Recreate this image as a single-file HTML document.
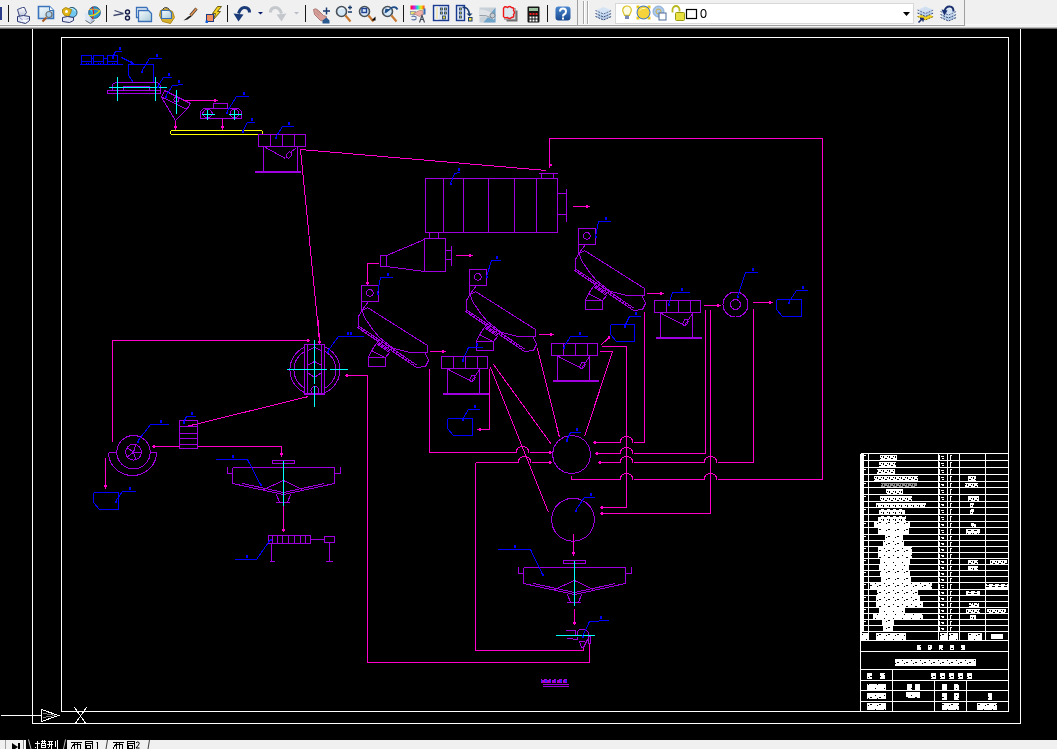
<!DOCTYPE html>
<html><head><meta charset="utf-8">
<style>
html,body{margin:0;padding:0;width:1057px;height:749px;overflow:hidden;background:#000;font-family:"Liberation Sans",sans-serif;}
.abs{position:absolute;left:0;top:0;}
#tb{position:absolute;left:0;top:0;width:1057px;height:29px;background:#f0f0f0;}
#tabs{position:absolute;left:0;top:739px;width:1057px;height:10px;background:#f0f0f0;overflow:hidden;}
</style></head><body>
<div id="tb">
<svg class="abs" width="1057" height="29">
<rect x="0" y="24" width="1057" height="1" fill="#f8f8f8"/>
<rect x="0" y="25" width="965" height="1" fill="#a0a0a0"/>
<rect x="964" y="0" width="1" height="26" fill="#a0a0a0"/>
<rect x="0" y="26" width="1057" height="1" fill="#f4f4f4"/>
<rect x="0" y="27" width="1057" height="1" fill="#bdbdbd"/>
<rect x="0" y="28" width="1057" height="1" fill="#6a6a6a"/>
<rect x="8" y="5" width="1" height="17" fill="#1a1a1a"/>
<rect x="106" y="5" width="1" height="17" fill="#1a1a1a"/>
<rect x="227" y="5" width="1" height="17" fill="#1a1a1a"/>
<rect x="305" y="5" width="1" height="17" fill="#1a1a1a"/>
<rect x="403" y="5" width="1" height="17" fill="#1a1a1a"/>
<rect x="547" y="5" width="1" height="17" fill="#1a1a1a"/>
<rect x="0" y="7" width="2" height="13" fill="#2c3e8a"/>
<rect x="577" y="0" width="1" height="25" fill="#a0a0a0"/>
<rect x="583" y="1" width="1" height="23" fill="#a8a8a8"/><rect x="584" y="1" width="1" height="23" fill="#ffffff"/>
<rect x="587" y="1" width="1" height="23" fill="#a8a8a8"/><rect x="588" y="1" width="1" height="23" fill="#ffffff"/>
<g transform="translate(16.5,6.5)"><defs><linearGradient id="pg" x1="0" y1="0" x2="0" y2="1"><stop offset="0" stop-color="#ffffff"/><stop offset="1" stop-color="#b8bfd8"/></linearGradient></defs><path d="M1 3l5-2h2l2 5-3 4H3z" fill="url(#pg)" stroke="#3a4680"/><path d="M1 10l6-1 6 1v4l-4 3-4-1-4-1z" fill="#e4e8f6" stroke="#2a3670"/><path d="M3 11l4 3 5-2" stroke="#8a94c0" fill="none"/><rect x="6" y="13" width="5" height="2" fill="#fff"/></g>
<g transform="translate(38.5,6.5)"><defs><linearGradient id="dg" x1="0" y1="0" x2="1" y2="1"><stop offset="0" stop-color="#f4f8fc"/><stop offset="1" stop-color="#b4d4e4"/></linearGradient></defs><path d="M0 0h11l4 4v8H0z" fill="url(#dg)" stroke="#3a74bc" stroke-width="1.6"/><path d="M11 0v4h4" fill="#fff" stroke="#3a74bc"/><circle cx="10.5" cy="8" r="3" fill="#a8d0ee" stroke="#707070" stroke-width="1.2"/><path d="M8 11l-4 4" stroke="#a85a20" stroke-width="2"/></g>
<g transform="translate(61.5,5.5)"><circle cx="10.5" cy="7" r="5" fill="#70c8f0" stroke="#24506a"/><path d="M8 3q4 -1 6 3" stroke="#c8f0ff" fill="none"/><path d="M1 4l3-2 3 1 3 1-1 4-2 3-4-1-2-3z" fill="#e0b418" stroke="#a07800" stroke-width="0.8"/><circle cx="5" cy="6" r="1.5" fill="#fff"/><path d="M1 12l5-1 6 1v3l-4 2-7-1z" fill="#e4e8f6" stroke="#2a3670"/></g>
<g transform="translate(84.5,5.5)"><path d="M0 7l6 2v9L1 15z" fill="#dce6f4"/><path d="M6 9l4-1v7l-4 3z" fill="#b4c4dc"/><path d="M1 15l5 3 4-3" stroke="#606870" fill="none"/><circle cx="10" cy="7" r="5.8" fill="#2c9ad4" stroke="#1e5a80"/><path d="M6 4q3 2 3 8" fill="none" stroke="#40d0ff" stroke-width="1.5"/><path d="M8 1.5q2 6 0 12" stroke="#d02020" fill="none" stroke-width="1.2"/><path d="M4.5 4q6 -1 11 1" stroke="#e8a030" fill="none"/><path d="M4.5 10q6 1 11 -5" stroke="#d8e020" fill="none" stroke-width="1.2"/></g>
<g transform="translate(113.5,9.5)"><path d="M0 6l10-2M1 1l9 3" stroke="#404a70" stroke-width="1.3"/><circle cx="14" cy="2.5" r="2" fill="none" stroke="#121a48" stroke-width="1.4"/><circle cx="14" cy="8.5" r="2" fill="none" stroke="#121a48" stroke-width="1.4"/></g>
<g transform="translate(136.5,7.5)"><defs><linearGradient id="cg" x1="0" y1="0" x2="1" y2="1"><stop offset="0" stop-color="#f8fcff"/><stop offset="1" stop-color="#a8cad8"/></linearGradient></defs><path d="M0 0h10l1 1v9H0z" fill="#eef4fa" stroke="#3a70b8" stroke-width="1.3"/><path d="M2 3h10l3 3v8H2z" fill="url(#cg)" stroke="#3a70b8" stroke-width="1.3"/></g>
<g transform="translate(158.5,6.5)"><path d="M2 4l6-2 6 3 2 6-4 6-8-2-3-6z" fill="#d8b030" stroke="#a07800" stroke-width="0.8"/><path d="M4 3q3-4 7 0" stroke="#303030" fill="none"/><path d="M3 4h8l2 2v6H3z" fill="url(#cg)" stroke="#3a70b8" stroke-width="1.2"/></g>
<g transform="translate(183.5,7.5)"><path d="M13 1l-6 7" stroke="#4a3a30" stroke-width="3"/><path d="M13 1l-6 7" stroke="#e09050" stroke-width="1.6"/><path d="M7 8l-2 1-5 4 4-1 4-3z" fill="#1a1a1a"/></g>
<g transform="translate(205.5,5.5)"><path d="M12 1h4l-4 5h3l-7 8 2-6h-3z" fill="#f4d020" stroke="#4a4000" stroke-width="0.8"/><rect x="1" y="9" width="7" height="7" fill="#f09060" stroke="#203a80"/><rect x="0" y="15" width="2.5" height="2.5" fill="#1060e0"/></g>
<g transform="translate(233.5,5.5)"><path d="M16 7q0-5-5-5-4 0-6 6" fill="none" stroke="#1a3a78" stroke-width="3"/><path d="M0 8l10 1-5 7z" fill="#1a3a78"/></g>
<path d="M258 12h5l-2.5 2.5z" fill="#0a1a6a"/>
<g transform="translate(269.5,5.5)"><path d="M1 7q0-5 5-5 4 0 6 6" fill="none" stroke="#c4c8cc" stroke-width="3"/><path d="M17 8l-10 1 5 7z" fill="#c4c8cc"/></g>
<path d="M294 12h5l-2.5 2.5z" fill="#b8bcc8"/>
<g transform="translate(312.5,6.5)"><path d="M1 3q2-2 5 1l5 5 3 1-1 5-5-1-6-6z" fill="#d8a098" stroke="#a06a68" stroke-width="0.8"/><path d="M3 6l4 3M4 4l4 3" stroke="#b07a78" stroke-width="0.6"/><path d="M10 14l4-3 3 3v3h-7z" fill="#2a5a90"/><path d="M14 1v7M10.5 4.5h7" stroke="#1a3a70" stroke-width="1.5"/></g>
<g transform="translate(335.5,4.5)"><circle cx="6" cy="7" r="5" fill="#d4e8f8" stroke="#4a5058" stroke-width="1.6"/><path d="M4 5q2-2 4-1" stroke="#fff" fill="none"/><path d="M10 11l5 6" stroke="#c87830" stroke-width="2.2"/><path d="M12.5 3h4M14.5 1v4M12.5 7.5h4" stroke="#1a3a6a" stroke-width="1.3"/></g>
<g transform="translate(358.5,4.5)"><circle cx="6" cy="7" r="5" fill="#d4e8f8" stroke="#4a5058" stroke-width="1.6"/><path d="M4 5q2-2 4-1" stroke="#fff" fill="none"/><path d="M10 11l5 6" stroke="#c87830" stroke-width="2.2"/><rect x="3.5" y="4" width="4.5" height="4" fill="none" stroke="#1f3f90" stroke-width="1.4"/><path d="M13 16h4v-4z" fill="#000"/></g>
<g transform="translate(381.5,4.5)"><circle cx="6" cy="7" r="5" fill="#d4e8f8" stroke="#4a5058" stroke-width="1.6"/><path d="M4 5q2-2 4-1" stroke="#fff" fill="none"/><path d="M10 11l5 6" stroke="#c87830" stroke-width="2.2"/><path d="M9 4q5-3 7 1" fill="none" stroke="#1f4f8a" stroke-width="1.8"/><path d="M3 9l1-5 5 1z" fill="#1f4f8a"/><path d="M4 8l5-4" stroke="#1f4f8a" stroke-width="1.5"/></g>
<defs><linearGradient id="rb"><stop offset="0" stop-color="#ff1010"/><stop offset=".25" stop-color="#e010e0"/><stop offset=".5" stop-color="#10e0e0"/><stop offset=".75" stop-color="#f0f010"/><stop offset="1" stop-color="#ff4010"/></linearGradient></defs>
<g transform="translate(410.5,5.5)"><rect x="0" y="0" width="14" height="4" fill="url(#rb)"/><rect x="0" y="6" width="5" height="3" fill="#e8e070" stroke="#6a7aa0" stroke-width="0.6"/><path d="M3 8l6-3 3 0 1 4-4 2z" fill="#f0b0a8" stroke="#a07070" stroke-width="0.6"/><rect x="13" y="3" width="2" height="6" fill="#3a6ab0"/><path d="M1 11q3-1 5 1M1 14q3 1 5-1" fill="none" stroke="#5a70a8" stroke-width="1.1"/><path d="M9 17l2.5-7 2.5 7M10 14h3" fill="none" stroke="#404858" stroke-width="1.1"/></g>
<g transform="translate(433.5,5.5)"><rect x="0" y="0" width="15" height="15" fill="#dde6f2" stroke="#1a3a90" stroke-width="1.4"/><rect x="2" y="1" width="3" height="13" fill="#f8f8ff"/><path d="M3.5 2v12" stroke="#d8b000" stroke-dasharray="1 1"/><g fill="#e0d040" stroke="#1a3a70" stroke-width="0.8"><rect x="7" y="2.5" width="2" height="2"/><rect x="11" y="2.5" width="2" height="2"/><rect x="7" y="6.5" width="2" height="2"/><rect x="11" y="6.5" width="2" height="2"/><rect x="9" y="10.5" width="3" height="3"/></g></g>
<g transform="translate(456.5,5.5)"><rect x="0" y="0" width="8" height="15" fill="#dde6f2" stroke="#1a3a90" stroke-width="1.4"/><g fill="#e0d040" stroke="#1a3a70" stroke-width="0.8"><rect x="3" y="2.5" width="2" height="2"/><rect x="3" y="6.5" width="2" height="2"/><rect x="3" y="10.5" width="2" height="2"/></g><path d="M6 2q6-1 7 7" fill="none" stroke="#1a3a70" stroke-width="1.6"/><path d="M10 8h6l-3 3z" fill="#1a3a70"/><rect x="12" y="12" width="3.5" height="3.5" fill="#f0e040" stroke="#1a3a70"/></g>
<g transform="translate(479.5,7.5)"><rect x="0" y="0" width="16" height="15" fill="#c8d0d8"/><path d="M16 0v15H4z" fill="#5a9ac8" opacity=".8"/><path d="M0 2q8 0 14 5 3 3 0 5-8-4-14-2z" fill="#e0e4e8"/><path d="M0 8q7-1 13 3" stroke="#909aa4" fill="none"/><ellipse cx="13" cy="8" rx="2.5" ry="2.5" fill="#c4ccd4" stroke="#7a8490"/></g>
<g transform="translate(502.5,6.5)"><rect x="4" y="4" width="11" height="11" fill="#707070"/><rect x="2" y="2" width="11" height="11" fill="#d4d8e0" stroke="#8a8a8a" stroke-width="0.6"/><path d="M1 2q1-3 4-1 2-2 4 0 3 0 2 3 2 2 0 4 1 3-2 3-2 2-4 0-3 1-4-1 0-3 0-4z" fill="#dce8f0" stroke="#ee1818" stroke-width="1.4"/></g>
<g transform="translate(527.5,6.5)"><rect x="0" y="0" width="12" height="16" rx="1" fill="#161616"/><rect x="1.5" y="1.5" width="9" height="3" fill="#9ac0a0"/><g fill="#e82020"><rect x="2" y="6.5" width="2" height="2"/><rect x="5" y="6.5" width="2" height="2"/><rect x="8" y="6.5" width="2" height="2"/></g><g fill="#ffffff"><rect x="2" y="10" width="2" height="2"/><rect x="5" y="10" width="2" height="2"/><rect x="8" y="10" width="2" height="2"/><rect x="2" y="13" width="2" height="2"/><rect x="5" y="13" width="2" height="2"/><rect x="8" y="13" width="2" height="2"/></g></g>
<g transform="translate(555.5,6.5)"><defs><linearGradient id="hg" x1="0" y1="0" x2="0" y2="1"><stop offset="0" stop-color="#4a88d0"/><stop offset="1" stop-color="#1a4a90"/></linearGradient></defs><rect x="0" y="0" width="15" height="14" rx="3" fill="url(#hg)"/><path d="M4.5 5q0-3 3-3t3 3q0 2-2 3-1 .5-1 2" fill="none" stroke="#fff" stroke-width="2"/><rect x="6.5" y="11" width="2" height="2" fill="#fff"/></g>
<g transform="translate(595.5,6.5)"><path d="M0 10l8 -3.5 8 3.5-8 3.5z" fill="#b4cce6"/><path d="M0 10l8 3.5 8-3.5" fill="none" stroke="#3a4a78" stroke-width="1" stroke-dasharray="2 1"/><path d="M0 7l8 -3.5 8 3.5-8 3.5z" fill="#c4d8ee"/><path d="M0 7l8 3.5 8-3.5" fill="none" stroke="#3a4a78" stroke-width="1" stroke-dasharray="2 1"/><path d="M0 4l8 -3.5 8 3.5-8 3.5z" fill="#d4e4f4"/><path d="M0 4l8 3.5 8-3.5" fill="none" stroke="#5a6a98" stroke-width="1" stroke-dasharray="2 1"/></g>
<rect x="615.5" y="3.5" width="298" height="20" fill="#ffffff" stroke="#d8d8d8"/>
<g transform="translate(622.5,5.5)"><path d="M4.5 0.5a4.3 4.3 0 0 1 4.3 4.3c0 2-1.5 3-1.8 5H2c-.3-2-1.8-3-1.8-5A4.3 4.3 0 0 1 4.5 0.5z" fill="#fffbe0" stroke="#d8c020" stroke-width="1.2"/><rect x="2.5" y="10" width="4" height="3.5" fill="#7a8ab8"/></g>
<g transform="translate(636.5,5.5)"><path d="M0 0h3v3H0zM11 0h3v3h-3zM0 11h3v3H0zM11 11h3v3h-3z" fill="#e8c820"/><circle cx="7" cy="7" r="6.5" fill="#f4d43a" stroke="#3a70c0" stroke-width="1"/><path d="M3 5q2-3 6-2" stroke="#fff6b0" fill="none"/></g>
<g transform="translate(652.5,5.5)"><circle cx="6" cy="6" r="5.5" fill="#a8c8ee" stroke="#8aa8d0"/><circle cx="6" cy="6" r="2.5" fill="none" stroke="#d0b040"/><rect x="6.5" y="7.5" width="7" height="7" fill="#fff" stroke="#4a6a9a"/></g>
<g transform="translate(670.5,5.5)"><path d="M2 7V4a3.5 3.5 0 0 1 7 0v2" fill="none" stroke="#b8b820" stroke-width="1.8"/><rect x="5" y="7" width="9" height="8" rx="1" fill="#e8e040" stroke="#9a9a10"/></g>
<rect x="686.5" y="9.5" width="10" height="9" fill="none" stroke="#000" stroke-width="1.2"/>
<path d="M703.5 9.5q-2.5 0-2.5 4t2.5 4 2.5-4-2.5-4z" fill="none" stroke="#000" stroke-width="1.1"/>
<path d="M903 12h7l-3.5 4z" fill="#000"/>
<g transform="translate(917.5,5.5)"><path d="M0 11l8 -3.5 8 3.5-8 3.5z" fill="#f0d020"/><path d="M0 11l8 3.5 8-3.5" fill="none" stroke="#8a7000" stroke-width="1" stroke-dasharray="2 1"/><path d="M0 7.5l8 -3.5 8 3.5-8 3.5z" fill="#b8d0ea"/><path d="M0 7.5l8 3.5 8-3.5" fill="none" stroke="#3a4a78" stroke-width="1" stroke-dasharray="2 1"/><path d="M0 4.5l8 -3.5 8 3.5-8 3.5z" fill="#d0e0f2"/><path d="M0 4.5l8 3.5 8-3.5" fill="none" stroke="#5a6a98" stroke-width="1" stroke-dasharray="2 1"/><path d="M1 17l4-4M2.5 13h3v3" stroke="#1a2a6a" stroke-width="1.5" fill="none"/></g>
<g transform="translate(940.5,5.5)"><path d="M0 12l8 -3.5 8 3.5-8 3.5z" fill="#b4cce6"/><path d="M0 12l8 3.5 8-3.5" fill="none" stroke="#3a4a78" stroke-width="1" stroke-dasharray="2 1"/><path d="M0 9l8 -3.5 8 3.5-8 3.5z" fill="#c4d8ee"/><path d="M0 9l8 3.5 8-3.5" fill="none" stroke="#3a4a78" stroke-width="1" stroke-dasharray="2 1"/><path d="M0 6l8 -3.5 8 3.5-8 3.5z" fill="#d4e4f4"/><path d="M0 6l8 3.5 8-3.5" fill="none" stroke="#5a6a98" stroke-width="1" stroke-dasharray="2 1"/><path d="M13 6q0-5-4-5-4 0-5 5" fill="none" stroke="#1a3070" stroke-width="2"/><path d="M1 4l6 1-3 5z" fill="#1a3070"/></g>
</svg>
</div>
<svg class="abs" width="1057" height="749" shape-rendering="crispEdges" style="top:0">
<line x1="32.5" y1="28.5" x2="32.5" y2="723.5" stroke="#ffffff" stroke-width="1"/>
<line x1="1020.5" y1="28.5" x2="1020.5" y2="723.5" stroke="#ffffff" stroke-width="1"/>
<line x1="32.5" y1="723.5" x2="1020.5" y2="723.5" stroke="#ffffff" stroke-width="1"/>
<rect x="61.5" y="37.5" width="947" height="674" stroke="#ffffff" stroke-width="1" fill="none"/>
<line x1="0.5" y1="715.5" x2="41.5" y2="715.5" stroke="#ffffff" stroke-width="1"/>
<polygon points="41.5,709.5 58.5,715.5 41.5,721.5" fill="none" stroke="#fff" stroke-width="1"/>
<line x1="43.5" y1="713.5" x2="55.5" y2="715.5" stroke="#808080" stroke-width="1"/>
<line x1="43.5" y1="717.5" x2="55.5" y2="715.5" stroke="#808080" stroke-width="1"/>
<line x1="74.5" y1="707.5" x2="86.5" y2="724.5" stroke="#ffffff" stroke-width="1"/>
<line x1="86.5" y1="707.5" x2="74.5" y2="724.5" stroke="#ffffff" stroke-width="1"/>
<rect x="81.5" y="55.5" width="10" height="9" stroke="#0000ff" stroke-width="1" fill="none"/>
<rect x="93.5" y="55.5" width="10" height="9" stroke="#0000ff" stroke-width="1" fill="none"/>
<rect x="107.5" y="55.5" width="10" height="9" stroke="#0000ff" stroke-width="1" fill="none"/>
<line x1="79.5" y1="64.5" x2="122.5" y2="64.5" stroke="#0000ff" stroke-width="1"/>
<line x1="81.5" y1="61.5" x2="91.5" y2="61.5" stroke="#0000ff" stroke-width="1"/>
<line x1="93.5" y1="61.5" x2="103.5" y2="61.5" stroke="#0000ff" stroke-width="1"/>
<line x1="107.5" y1="61.5" x2="117.5" y2="61.5" stroke="#0000ff" stroke-width="1"/>
<line x1="91.5" y1="58.5" x2="93.5" y2="58.5" stroke="#0000ff" stroke-width="1"/>
<line x1="103.5" y1="58.5" x2="107.5" y2="58.5" stroke="#0000ff" stroke-width="1"/>
<line x1="86.5" y1="62.5" x2="86.5" y2="63.5" stroke="#0000ff" stroke-width="1"/>
<line x1="88.5" y1="62.5" x2="88.5" y2="63.5" stroke="#0000ff" stroke-width="1"/>
<line x1="98.5" y1="62.5" x2="98.5" y2="63.5" stroke="#0000ff" stroke-width="1"/>
<line x1="100.5" y1="62.5" x2="100.5" y2="63.5" stroke="#0000ff" stroke-width="1"/>
<line x1="112.5" y1="62.5" x2="112.5" y2="63.5" stroke="#0000ff" stroke-width="1"/>
<line x1="114.5" y1="62.5" x2="114.5" y2="63.5" stroke="#0000ff" stroke-width="1"/>
<polyline points="112.5,57.5 115.5,51.5 121.5,51.5" stroke="#0000ff" stroke-width="1" fill="none"/>
<rect x="112" y="57" width="2" height="2" fill="#0000ff"/>
<rect x="119" y="47" width="2" height="3" fill="#0000ff"/>
<line x1="121.5" y1="57.5" x2="133.5" y2="63.5" stroke="#0000ff" stroke-width="1"/>
<line x1="131.5" y1="61.5" x2="133.5" y2="63.5" stroke="#0000ff" stroke-width="1"/>
<line x1="130.5" y1="63.5" x2="133.5" y2="63.5" stroke="#0000ff" stroke-width="1"/>
<polyline points="128.5,75.5 128.5,64.5 153.5,64.5 153.5,82.5 133.5,82.5 128.5,75.5" stroke="#0000ff" stroke-width="1" fill="none"/>
<polyline points="141.5,71.5 149.5,58.5 161.5,58.5" stroke="#0000ff" stroke-width="1" fill="none"/>
<rect x="141" y="71" width="2" height="2" fill="#0000ff"/>
<rect x="156" y="54" width="2" height="3" fill="#0000ff"/>
<rect x="107.5" y="90.5" width="53" height="3" stroke="#a000e0" stroke-width="1" fill="none"/>
<polyline points="112.5,90.5 112.5,84.5 115.5,82.5 157.5,82.5 160.5,85.5 160.5,90.5" stroke="#a000e0" stroke-width="1" fill="none"/>
<polyline points="112.5,90.5 123.5,90.5 123.5,86.5 149.5,86.5 149.5,90.5 160.5,90.5" stroke="#a000e0" stroke-width="1" fill="none"/>
<line x1="108.5" y1="87.5" x2="166.5" y2="87.5" stroke="#00ffff" stroke-width="1"/>
<line x1="117.5" y1="76.5" x2="117.5" y2="100.5" stroke="#00ffff" stroke-width="1"/>
<line x1="155.5" y1="76.5" x2="155.5" y2="100.5" stroke="#00ffff" stroke-width="1"/>
<polyline points="157.5,86.5 163.5,77.5 171.5,77.5" stroke="#0000ff" stroke-width="1" fill="none"/>
<rect x="157" y="86" width="2" height="2" fill="#0000ff"/>
<rect x="168" y="73" width="2" height="3" fill="#0000ff"/>
<polyline points="164.5,90.5 190.5,103.5 187.5,108.5 175.5,120.5 161.5,97.5 164.5,90.5" stroke="#a000e0" stroke-width="1" fill="none"/>
<line x1="162.5" y1="97.5" x2="187.5" y2="109.5" stroke="#a000e0" stroke-width="1"/>
<circle cx="176.5" cy="99.5" r="2.5" stroke="#a000e0" stroke-width="1" fill="none"/>
<line x1="176.5" y1="89.5" x2="176.5" y2="113.5" stroke="#00ffff" stroke-width="1"/>
<polyline points="165.5,96.5 172.5,85.5 183.5,84.5" stroke="#0000ff" stroke-width="1" fill="none"/>
<rect x="165" y="96" width="2" height="2" fill="#0000ff"/>
<rect x="178" y="80" width="2" height="3" fill="#0000ff"/>
<line x1="175.5" y1="120.5" x2="175.5" y2="130.5" stroke="#ff00cc" stroke-width="1"/>
<rect x="174" y="126" width="3" height="2" fill="#ff00cc"/>
<line x1="182.5" y1="100.5" x2="217.5" y2="100.5" stroke="#ff00cc" stroke-width="1"/>
<rect x="214" y="99" width="2" height="3" fill="#ff00cc"/>
<rect x="213.5" y="103.5" width="14" height="5" stroke="#a000e0" stroke-width="1" fill="none"/>
<polyline points="203.5,108.5 238.5,108.5 241.5,111.5 241.5,118.5 200.5,118.5 200.5,111.5 203.5,108.5" stroke="#a000e0" stroke-width="1" fill="none"/>
<polygon points="212.5,113.5 211.5,115.5 210.5,116.5 209.5,117.5 207.5,117.5 205.5,117.5 204.5,116.5 203.5,115.5 202.5,113.5 203.5,111.5 204.5,110.5 205.5,109.5 207.5,109.5 209.5,109.5 210.5,110.5 211.5,111.5" stroke="#a000e0" stroke-width="1" fill="none"/>
<polygon points="238.5,113.5 238.5,115.5 237.5,116.5 236.5,117.5 234.5,117.5 232.5,117.5 231.5,116.5 230.5,115.5 230.5,113.5 230.5,111.5 231.5,110.5 232.5,109.5 234.5,109.5 236.5,109.5 237.5,110.5 238.5,111.5" stroke="#a000e0" stroke-width="1" fill="none"/>
<line x1="201.5" y1="114.5" x2="214.5" y2="114.5" stroke="#00ffff" stroke-width="1"/>
<line x1="207.5" y1="109.5" x2="207.5" y2="119.5" stroke="#00ffff" stroke-width="1"/>
<line x1="228.5" y1="114.5" x2="241.5" y2="114.5" stroke="#00ffff" stroke-width="1"/>
<line x1="234.5" y1="109.5" x2="234.5" y2="119.5" stroke="#00ffff" stroke-width="1"/>
<line x1="222.5" y1="118.5" x2="222.5" y2="130.5" stroke="#ff00cc" stroke-width="1"/>
<rect x="221" y="126" width="3" height="2" fill="#ff00cc"/>
<polyline points="226.5,112.5 236.5,96.5 248.5,96.5" stroke="#0000ff" stroke-width="1" fill="none"/>
<rect x="226" y="112" width="2" height="2" fill="#0000ff"/>
<rect x="243" y="92" width="2" height="3" fill="#0000ff"/>
<rect x="170.5" y="130.5" width="92" height="4" rx="2" fill="none" stroke="#ffff00"/>
<polyline points="242.5,131.5 247.5,122.5 254.5,122.5" stroke="#0000ff" stroke-width="1" fill="none"/>
<rect x="242" y="131" width="2" height="2" fill="#0000ff"/>
<rect x="251" y="118" width="2" height="3" fill="#0000ff"/>
<rect x="258.5" y="134.5" width="47" height="12" stroke="#a000e0" stroke-width="1" fill="none"/>
<line x1="270.5" y1="134.5" x2="270.5" y2="146.5" stroke="#a000e0" stroke-width="1"/>
<line x1="282.5" y1="134.5" x2="282.5" y2="146.5" stroke="#a000e0" stroke-width="1"/>
<line x1="294.5" y1="134.5" x2="294.5" y2="146.5" stroke="#a000e0" stroke-width="1"/>
<line x1="263.5" y1="146.5" x2="263.5" y2="172.5" stroke="#a000e0" stroke-width="1"/>
<line x1="297.5" y1="146.5" x2="297.5" y2="172.5" stroke="#a000e0" stroke-width="1"/>
<rect x="255" y="171" width="46" height="2" fill="#a000e0"/>
<line x1="265.5" y1="147.5" x2="285.5" y2="158.5" stroke="#a000e0" stroke-width="1"/>
<line x1="296.5" y1="147.5" x2="290.5" y2="152.5" stroke="#a000e0" stroke-width="1"/>
<ellipse cx="289" cy="155" rx="2.2" ry="3.3" transform="rotate(30 289 155)" fill="none" stroke="#a000e0"/>
<polyline points="275.5,137.5 282.5,126.5 293.5,126.5" stroke="#0000ff" stroke-width="1" fill="none"/>
<rect x="275" y="137" width="2" height="2" fill="#0000ff"/>
<rect x="288" y="122" width="2" height="3" fill="#0000ff"/>
<line x1="300.5" y1="149.5" x2="546.5" y2="170.5" stroke="#ff00cc" stroke-width="1"/>
<line x1="300.5" y1="149.5" x2="319.5" y2="341.5" stroke="#ff00cc" stroke-width="1"/>
<rect x="425.5" y="178.5" width="132" height="54" stroke="#a000e0" stroke-width="1" fill="none"/>
<line x1="443.5" y1="178.5" x2="443.5" y2="232.5" stroke="#a000e0" stroke-width="1"/>
<line x1="463.5" y1="178.5" x2="463.5" y2="232.5" stroke="#a000e0" stroke-width="1"/>
<line x1="488.5" y1="178.5" x2="488.5" y2="232.5" stroke="#a000e0" stroke-width="1"/>
<line x1="514.5" y1="178.5" x2="514.5" y2="232.5" stroke="#a000e0" stroke-width="1"/>
<line x1="536.5" y1="178.5" x2="536.5" y2="232.5" stroke="#a000e0" stroke-width="1"/>
<line x1="538.5" y1="173.5" x2="557.5" y2="173.5" stroke="#a000e0" stroke-width="1"/>
<line x1="541.5" y1="173.5" x2="541.5" y2="178.5" stroke="#a000e0" stroke-width="1"/>
<line x1="553.5" y1="173.5" x2="553.5" y2="178.5" stroke="#a000e0" stroke-width="1"/>
<line x1="566.5" y1="188.5" x2="566.5" y2="221.5" stroke="#a000e0" stroke-width="1"/>
<line x1="557.5" y1="193.5" x2="566.5" y2="193.5" stroke="#a000e0" stroke-width="1"/>
<line x1="557.5" y1="214.5" x2="566.5" y2="214.5" stroke="#a000e0" stroke-width="1"/>
<line x1="572.5" y1="206.5" x2="589.5" y2="206.5" stroke="#ff00cc" stroke-width="1"/>
<rect x="586" y="205" width="2" height="3" fill="#ff00cc"/>
<polyline points="450.5,183.5 454.5,173.5 460.5,172.5" stroke="#0000ff" stroke-width="1" fill="none"/>
<rect x="450" y="183" width="2" height="2" fill="#0000ff"/>
<rect x="458" y="168" width="2" height="3" fill="#0000ff"/>
<polyline points="549.5,167.5 549.5,138.5 822.5,138.5 822.5,478.5" stroke="#ff00cc" stroke-width="1" fill="none"/>
<rect x="549" y="164" width="3" height="2" fill="#ff00cc"/>
<line x1="429.5" y1="232.5" x2="429.5" y2="238.5" stroke="#a000e0" stroke-width="1"/>
<line x1="438.5" y1="232.5" x2="438.5" y2="238.5" stroke="#a000e0" stroke-width="1"/>
<rect x="424.5" y="238.5" width="21" height="33" stroke="#a000e0" stroke-width="1" fill="none"/>
<polyline points="424.5,239.5 386.5,255.5 386.5,266.5 424.5,271.5" stroke="#a000e0" stroke-width="1" fill="none"/>
<rect x="380.5" y="255.5" width="6" height="11" stroke="#a000e0" stroke-width="1" fill="none"/>
<line x1="451.5" y1="245.5" x2="451.5" y2="265.5" stroke="#a000e0" stroke-width="1"/>
<line x1="445.5" y1="250.5" x2="451.5" y2="250.5" stroke="#a000e0" stroke-width="1"/>
<line x1="445.5" y1="259.5" x2="451.5" y2="259.5" stroke="#a000e0" stroke-width="1"/>
<line x1="455.5" y1="255.5" x2="472.5" y2="255.5" stroke="#ff00cc" stroke-width="1"/>
<rect x="469" y="254" width="2" height="3" fill="#ff00cc"/>
<polyline points="378.5,263.5 367.5,263.5 367.5,285.5" stroke="#ff00cc" stroke-width="1" fill="none"/>
<rect x="366" y="282" width="3" height="2" fill="#ff00cc"/>
<rect x="361.5" y="285.5" width="17" height="16" stroke="#a000e0" stroke-width="1" fill="none"/>
<circle cx="369.8" cy="292.9" r="3.3" stroke="#a000e0" stroke-width="1" fill="none"/>
<polyline points="361.5,301.5 361.5,310.5" stroke="#a000e0" stroke-width="1" fill="none"/>
<polyline points="368.5,301.5 362.5,309.5" stroke="#a000e0" stroke-width="1" fill="none"/>
<polyline points="362.5,310.5 367.5,307.5 427.5,345.5 427.5,352.5 410.5,352.5 393.5,348.5 379.5,337.5 373.5,330.5 364.5,317.5 362.5,311.5" stroke="#a000e0" stroke-width="1" fill="none"/>
<polyline points="362.5,309.5 358.5,316.5 358.5,327.5 357.5,327.5 416.5,367.5" stroke="#a000e0" stroke-width="1" fill="none"/>
<polyline points="359.5,326.5 417.5,365.5" stroke="#a000e0" stroke-width="1" fill="none"/>
<polyline points="358.5,327.0 417.0,366.5" stroke="#a000e0" stroke-dasharray="1 2" fill="none"/>
<polyline points="425.5,353.5 428.5,360.5 425.5,366.5 416.5,367.5" stroke="#a000e0" stroke-width="1" fill="none"/>
<rect x="368.5" y="357.5" width="17" height="9" stroke="#a000e0" stroke-width="1" fill="none"/>
<polyline points="368.5,357.5 371.5,350.5 376.5,343.5" stroke="#a000e0" stroke-width="1" fill="none"/>
<polyline points="371.5,350.5 384.5,357.5" stroke="#a000e0" stroke-width="1" fill="none"/>
<polyline points="385.5,357.5 389.5,352.5" stroke="#a000e0" stroke-width="1" fill="none"/>
<polyline points="376.5,343.5 389.5,352.5" stroke="#a000e0" stroke-width="1" fill="none"/>
<polyline points="377.5,342.5 390.5,351.5" stroke="#a000e0" stroke-width="1" fill="none"/>
<rect x="469.5" y="269.5" width="17" height="16" stroke="#a000e0" stroke-width="1" fill="none"/>
<circle cx="477.8" cy="276.9" r="3.3" stroke="#a000e0" stroke-width="1" fill="none"/>
<polyline points="469.5,285.5 469.5,294.5" stroke="#a000e0" stroke-width="1" fill="none"/>
<polyline points="476.5,285.5 470.5,293.5" stroke="#a000e0" stroke-width="1" fill="none"/>
<polyline points="470.5,294.5 475.5,291.5 535.5,329.5 535.5,336.5 518.5,336.5 501.5,332.5 487.5,321.5 481.5,314.5 472.5,301.5 470.5,295.5" stroke="#a000e0" stroke-width="1" fill="none"/>
<polyline points="470.5,293.5 466.5,300.5 466.5,311.5 465.5,311.5 524.5,351.5" stroke="#a000e0" stroke-width="1" fill="none"/>
<polyline points="467.5,310.5 525.5,349.5" stroke="#a000e0" stroke-width="1" fill="none"/>
<polyline points="466.5,311.0 525.0,350.5" stroke="#a000e0" stroke-dasharray="1 2" fill="none"/>
<polyline points="533.5,337.5 536.5,344.5 533.5,350.5 524.5,351.5" stroke="#a000e0" stroke-width="1" fill="none"/>
<rect x="476.5" y="341.5" width="17" height="9" stroke="#a000e0" stroke-width="1" fill="none"/>
<polyline points="476.5,341.5 479.5,334.5 484.5,327.5" stroke="#a000e0" stroke-width="1" fill="none"/>
<polyline points="479.5,334.5 492.5,341.5" stroke="#a000e0" stroke-width="1" fill="none"/>
<polyline points="493.5,341.5 497.5,336.5" stroke="#a000e0" stroke-width="1" fill="none"/>
<polyline points="484.5,327.5 497.5,336.5" stroke="#a000e0" stroke-width="1" fill="none"/>
<polyline points="485.5,326.5 498.5,335.5" stroke="#a000e0" stroke-width="1" fill="none"/>
<rect x="578.5" y="228.5" width="17" height="16" stroke="#a000e0" stroke-width="1" fill="none"/>
<circle cx="586.8" cy="235.9" r="3.3" stroke="#a000e0" stroke-width="1" fill="none"/>
<polyline points="578.5,244.5 578.5,253.5" stroke="#a000e0" stroke-width="1" fill="none"/>
<polyline points="585.5,244.5 579.5,252.5" stroke="#a000e0" stroke-width="1" fill="none"/>
<polyline points="579.5,253.5 584.5,250.5 644.5,288.5 644.5,295.5 627.5,295.5 610.5,291.5 596.5,280.5 590.5,273.5 581.5,260.5 579.5,254.5" stroke="#a000e0" stroke-width="1" fill="none"/>
<polyline points="579.5,252.5 575.5,259.5 575.5,270.5 574.5,270.5 633.5,310.5" stroke="#a000e0" stroke-width="1" fill="none"/>
<polyline points="576.5,269.5 634.5,308.5" stroke="#a000e0" stroke-width="1" fill="none"/>
<polyline points="575.5,270.0 634.0,309.5" stroke="#a000e0" stroke-dasharray="1 2" fill="none"/>
<polyline points="642.5,296.5 645.5,303.5 642.5,309.5 633.5,310.5" stroke="#a000e0" stroke-width="1" fill="none"/>
<rect x="585.5" y="300.5" width="17" height="9" stroke="#a000e0" stroke-width="1" fill="none"/>
<polyline points="585.5,300.5 588.5,293.5 593.5,286.5" stroke="#a000e0" stroke-width="1" fill="none"/>
<polyline points="588.5,293.5 601.5,300.5" stroke="#a000e0" stroke-width="1" fill="none"/>
<polyline points="602.5,300.5 606.5,295.5" stroke="#a000e0" stroke-width="1" fill="none"/>
<polyline points="593.5,286.5 606.5,295.5" stroke="#a000e0" stroke-width="1" fill="none"/>
<polyline points="594.5,285.5 607.5,294.5" stroke="#a000e0" stroke-width="1" fill="none"/>
<polyline points="377.5,293.5 380.5,277.5 392.5,277.5" stroke="#0000ff" stroke-width="1" fill="none"/>
<rect x="377" y="293" width="2" height="2" fill="#0000ff"/>
<rect x="387" y="273" width="2" height="3" fill="#0000ff"/>
<polyline points="486.5,276.5 491.5,260.5 500.5,260.5" stroke="#0000ff" stroke-width="1" fill="none"/>
<rect x="486" y="276" width="2" height="2" fill="#0000ff"/>
<rect x="496" y="256" width="2" height="3" fill="#0000ff"/>
<polyline points="595.5,236.5 598.5,221.5 610.5,221.5" stroke="#0000ff" stroke-width="1" fill="none"/>
<rect x="595" y="236" width="2" height="2" fill="#0000ff"/>
<rect x="605" y="217" width="2" height="3" fill="#0000ff"/>
<line x1="340.5" y1="336.5" x2="363.5" y2="336.5" stroke="#0000ff" stroke-width="1"/>
<rect x="347" y="332" width="2" height="3" fill="#0000ff"/>
<line x1="340.5" y1="369.5" x2="347.5" y2="369.5" stroke="#00ffff" stroke-width="1"/>
<line x1="429.5" y1="351.5" x2="445.5" y2="351.5" stroke="#ff00cc" stroke-width="1"/>
<rect x="442" y="350" width="2" height="3" fill="#ff00cc"/>
<line x1="538.5" y1="334.5" x2="553.5" y2="334.5" stroke="#ff00cc" stroke-width="1"/>
<rect x="550" y="333" width="2" height="3" fill="#ff00cc"/>
<line x1="646.5" y1="293.5" x2="663.5" y2="293.5" stroke="#ff00cc" stroke-width="1"/>
<rect x="660" y="292" width="2" height="3" fill="#ff00cc"/>

<rect x="441.5" y="356.5" width="46" height="12" stroke="#a000e0" stroke-width="1" fill="none"/>
<line x1="453.5" y1="356.5" x2="453.5" y2="368.5" stroke="#a000e0" stroke-width="1"/>
<line x1="465.5" y1="356.5" x2="465.5" y2="368.5" stroke="#a000e0" stroke-width="1"/>
<line x1="477.5" y1="356.5" x2="477.5" y2="368.5" stroke="#a000e0" stroke-width="1"/>
<line x1="447.5" y1="368.5" x2="447.5" y2="393.5" stroke="#a000e0" stroke-width="1"/>
<line x1="479.5" y1="368.5" x2="479.5" y2="393.5" stroke="#a000e0" stroke-width="1"/>
<rect x="443" y="393" width="46" height="2" fill="#a000e0"/>
<polyline points="448.5,369.5 471.5,381.5 479.5,369.5" stroke="#a000e0" stroke-width="1" fill="none"/>
<ellipse cx="472.5" cy="378.5" rx="2.2" ry="3.3" transform="rotate(30 472.5 378.5)" fill="none" stroke="#a000e0"/>
<rect x="551.5" y="343.5" width="46" height="12" stroke="#a000e0" stroke-width="1" fill="none"/>
<line x1="563.5" y1="343.5" x2="563.5" y2="355.5" stroke="#a000e0" stroke-width="1"/>
<line x1="575.5" y1="343.5" x2="575.5" y2="355.5" stroke="#a000e0" stroke-width="1"/>
<line x1="587.5" y1="343.5" x2="587.5" y2="355.5" stroke="#a000e0" stroke-width="1"/>
<line x1="557.5" y1="355.5" x2="557.5" y2="380.5" stroke="#a000e0" stroke-width="1"/>
<line x1="589.5" y1="355.5" x2="589.5" y2="380.5" stroke="#a000e0" stroke-width="1"/>
<rect x="553" y="380" width="46" height="2" fill="#a000e0"/>
<polyline points="558.5,356.5 581.5,368.5 589.5,356.5" stroke="#a000e0" stroke-width="1" fill="none"/>
<ellipse cx="582.5" cy="365.5" rx="2.2" ry="3.3" transform="rotate(30 582.5 365.5)" fill="none" stroke="#a000e0"/>
<rect x="654.5" y="300.5" width="46" height="12" stroke="#a000e0" stroke-width="1" fill="none"/>
<line x1="666.5" y1="300.5" x2="666.5" y2="312.5" stroke="#a000e0" stroke-width="1"/>
<line x1="678.5" y1="300.5" x2="678.5" y2="312.5" stroke="#a000e0" stroke-width="1"/>
<line x1="690.5" y1="300.5" x2="690.5" y2="312.5" stroke="#a000e0" stroke-width="1"/>
<line x1="660.5" y1="312.5" x2="660.5" y2="337.5" stroke="#a000e0" stroke-width="1"/>
<line x1="692.5" y1="312.5" x2="692.5" y2="337.5" stroke="#a000e0" stroke-width="1"/>
<rect x="656" y="337" width="46" height="2" fill="#a000e0"/>
<polyline points="661.5,313.5 684.5,325.5 692.5,313.5" stroke="#a000e0" stroke-width="1" fill="none"/>
<ellipse cx="685.5" cy="322.5" rx="2.2" ry="3.3" transform="rotate(30 685.5 322.5)" fill="none" stroke="#a000e0"/>
<polyline points="462.5,360.5 468.5,347.5 482.5,347.5" stroke="#0000ff" stroke-width="1" fill="none"/>
<rect x="462" y="360" width="2" height="2" fill="#0000ff"/>
<rect x="476" y="343" width="2" height="3" fill="#0000ff"/>
<polyline points="563.5,347.5 570.5,336.5 587.5,336.5" stroke="#0000ff" stroke-width="1" fill="none"/>
<rect x="563" y="347" width="2" height="2" fill="#0000ff"/>
<rect x="579" y="332" width="2" height="3" fill="#0000ff"/>
<polyline points="668.5,304.5 672.5,292.5 689.5,292.5" stroke="#0000ff" stroke-width="1" fill="none"/>
<rect x="668" y="304" width="2" height="2" fill="#0000ff"/>
<rect x="681" y="288" width="2" height="3" fill="#0000ff"/>
<line x1="703.5" y1="305.5" x2="720.5" y2="305.5" stroke="#ff00cc" stroke-width="1"/>
<rect x="717" y="304" width="2" height="3" fill="#ff00cc"/>
<circle cx="735.5" cy="304.5" r="12.5" stroke="#a000e0" stroke-width="1" fill="none"/>
<circle cx="735.5" cy="304.5" r="5" stroke="#a000e0" stroke-width="1" fill="none"/>
<polyline points="737.5,296.5 745.5,272.5 757.5,272.5" stroke="#0000ff" stroke-width="1" fill="none"/>
<rect x="737" y="296" width="2" height="2" fill="#0000ff"/>
<rect x="752" y="268" width="2" height="3" fill="#0000ff"/>
<line x1="752.5" y1="302.5" x2="772.5" y2="302.5" stroke="#ff00cc" stroke-width="1"/>
<rect x="769" y="301" width="2" height="3" fill="#ff00cc"/>
<polyline points="776.5,299.5 801.5,299.5 801.5,316.5 782.5,316.5 776.5,309.5 776.5,299.5" stroke="#0000ff" stroke-width="1" fill="none"/>
<polyline points="788.5,302.5 796.5,290.5 807.5,290.5" stroke="#0000ff" stroke-width="1" fill="none"/>
<rect x="788" y="302" width="2" height="2" fill="#0000ff"/>
<rect x="802" y="286" width="2" height="3" fill="#0000ff"/>
<polyline points="610.5,324.5 634.5,324.5 634.5,341.5 616.5,341.5 610.5,334.5 610.5,324.5" stroke="#0000ff" stroke-width="1" fill="none"/>
<polyline points="624.5,326.5 629.5,316.5 640.5,316.5" stroke="#0000ff" stroke-width="1" fill="none"/>
<rect x="624" y="326" width="2" height="2" fill="#0000ff"/>
<rect x="635" y="312" width="2" height="3" fill="#0000ff"/>
<polyline points="601.5,344.5 610.5,336.5" stroke="#ff00cc" stroke-width="1" fill="none"/>
<rect x="608" y="336" width="2" height="3" fill="#ff00cc"/>
<polyline points="447.5,418.5 472.5,418.5 472.5,435.5 453.5,435.5 447.5,428.5 447.5,418.5" stroke="#0000ff" stroke-width="1" fill="none"/>
<polyline points="462.5,419.5 468.5,409.5 479.5,409.5" stroke="#0000ff" stroke-width="1" fill="none"/>
<rect x="462" y="419" width="2" height="2" fill="#0000ff"/>
<rect x="474" y="405" width="2" height="3" fill="#0000ff"/>
<polygon points="590.8,454.5 589.3,461.8 585.2,468.1 578.9,472.2 571.6,473.7 564.3,472.2 558.0,468.1 553.9,461.8 552.4,454.5 553.9,447.2 558.0,440.9 564.3,436.8 571.6,435.3 578.9,436.8 585.2,440.9 589.3,447.2" fill="none" stroke="#a000e0"/>
<polygon points="594.6,519.7 593.5,526.4 590.5,532.4 585.7,537.2 579.7,540.2 573.0,541.3 566.3,540.2 560.3,537.2 555.5,532.4 552.5,526.4 551.4,519.7 552.5,513.0 555.5,507.0 560.3,502.2 566.3,499.2 573.0,498.1 579.7,499.2 585.7,502.2 590.5,507.0 593.5,513.0" fill="none" stroke="#a000e0"/>
<polyline points="566.5,440.5 570.5,432.5 580.5,432.5" stroke="#0000ff" stroke-width="1" fill="none"/>
<rect x="566" y="440" width="2" height="2" fill="#0000ff"/>
<rect x="576" y="428" width="2" height="3" fill="#0000ff"/>
<polyline points="575.5,510.5 584.5,497.5 594.5,497.5" stroke="#0000ff" stroke-width="1" fill="none"/>
<rect x="575" y="510" width="2" height="2" fill="#0000ff"/>
<rect x="590" y="493" width="2" height="3" fill="#0000ff"/>
<line x1="573.5" y1="533.5" x2="573.5" y2="555.5" stroke="#ff00cc" stroke-width="1"/>
<rect x="572" y="552" width="3" height="2" fill="#ff00cc"/>
<polyline points="489.5,368.5 489.5,429.5 476.5,429.5" stroke="#ff00cc" stroke-width="1" fill="none"/>
<rect x="479" y="428" width="2" height="3" fill="#ff00cc"/>
<polyline points="429.5,368.5 429.5,452.5" stroke="#ff00cc" stroke-width="1" fill="none"/>
<line x1="429.5" y1="452.5" x2="516.5" y2="452.5" stroke="#ff00cc" stroke-width="1"/>
<path d="M516.0 452.5 Q517.0 446.5 522.5 446.5 Q528.0 446.5 529.0 452.5" stroke="#ff00cc" fill="none"/>
<line x1="529.5" y1="452.5" x2="551.5" y2="452.5" stroke="#ff00cc" stroke-width="1"/>
<rect x="549" y="451" width="2" height="3" fill="#ff00cc"/>
<polyline points="475.5,650.5 475.5,462.5" stroke="#ff00cc" stroke-width="1" fill="none"/>
<line x1="475.5" y1="462.5" x2="518.5" y2="462.5" stroke="#ff00cc" stroke-width="1"/>
<path d="M518.0 462.5 Q519.0 456.5 524.5 456.5 Q530.0 456.5 531.0 462.5" stroke="#ff00cc" fill="none"/>
<line x1="531.5" y1="462.5" x2="551.5" y2="462.5" stroke="#ff00cc" stroke-width="1"/>
<rect x="549" y="461" width="2" height="3" fill="#ff00cc"/>
<polyline points="475.5,650.5 583.5,650.5" stroke="#ff00cc" stroke-width="1" fill="none"/>
<polyline points="344.5,375.5 367.5,375.5 367.5,662.5 589.5,662.5 589.5,643.5" stroke="#ff00cc" stroke-width="1" fill="none"/>
<rect x="346" y="374" width="2" height="3" fill="#ff00cc"/>
<line x1="493.5" y1="364.5" x2="551.5" y2="444.5" stroke="#ff00cc" stroke-width="1"/>
<line x1="490.5" y1="367.5" x2="548.5" y2="512.5" stroke="#ff00cc" stroke-width="1"/>
<line x1="537.5" y1="348.5" x2="559.5" y2="437.5" stroke="#ff00cc" stroke-width="1"/>
<polyline points="599.5,351.5 612.5,351.5 584.5,436.5" stroke="#ff00cc" stroke-width="1" fill="none"/>
<polyline points="601.5,346.5 626.5,346.5 626.5,507.5 599.5,507.5" stroke="#ff00cc" stroke-width="1" fill="none"/>
<rect x="601" y="506" width="2" height="3" fill="#ff00cc"/>
<polyline points="644.5,311.5 644.5,442.5" stroke="#ff00cc" stroke-width="1" fill="none"/>
<line x1="592.5" y1="442.5" x2="620.5" y2="442.5" stroke="#ff00cc" stroke-width="1"/>
<path d="M620.0 442.5 Q621.0 436.5 626.5 436.5 Q632.0 436.5 633.0 442.5" stroke="#ff00cc" fill="none"/>
<line x1="633.5" y1="442.5" x2="644.5" y2="442.5" stroke="#ff00cc" stroke-width="1"/>
<rect x="594" y="441" width="2" height="3" fill="#ff00cc"/>
<polyline points="705.5,309.5 705.5,453.5" stroke="#ff00cc" stroke-width="1" fill="none"/>
<line x1="594.5" y1="453.5" x2="620.5" y2="453.5" stroke="#ff00cc" stroke-width="1"/>
<path d="M620.0 453.5 Q621.0 447.5 626.5 447.5 Q632.0 447.5 633.0 453.5" stroke="#ff00cc" fill="none"/>
<line x1="633.5" y1="453.5" x2="705.5" y2="453.5" stroke="#ff00cc" stroke-width="1"/>
<rect x="596" y="452" width="2" height="3" fill="#ff00cc"/>
<polyline points="710.5,309.5 710.5,513.5 599.5,513.5" stroke="#ff00cc" stroke-width="1" fill="none"/>
<rect x="601" y="512" width="2" height="3" fill="#ff00cc"/>
<polyline points="753.5,308.5 753.5,462.5" stroke="#ff00cc" stroke-width="1" fill="none"/>
<line x1="597.5" y1="462.5" x2="620.5" y2="462.5" stroke="#ff00cc" stroke-width="1"/>
<path d="M620.0 462.5 Q621.0 456.5 626.5 456.5 Q632.0 456.5 633.0 462.5" stroke="#ff00cc" fill="none"/>
<line x1="633.5" y1="462.5" x2="704.5" y2="462.5" stroke="#ff00cc" stroke-width="1"/>
<path d="M704.0 462.5 Q705.0 456.5 710.5 456.5 Q716.0 456.5 717.0 462.5" stroke="#ff00cc" fill="none"/>
<line x1="717.5" y1="462.5" x2="753.5" y2="462.5" stroke="#ff00cc" stroke-width="1"/>
<rect x="599" y="461" width="2" height="3" fill="#ff00cc"/>
<line x1="571.5" y1="479.5" x2="620.5" y2="479.5" stroke="#ff00cc" stroke-width="1"/>
<path d="M620.0 479.5 Q621.0 473.5 626.5 473.5 Q632.0 473.5 633.0 479.5" stroke="#ff00cc" fill="none"/>
<line x1="633.5" y1="479.5" x2="704.5" y2="479.5" stroke="#ff00cc" stroke-width="1"/>
<path d="M704.0 479.5 Q705.0 473.5 710.5 473.5 Q716.0 473.5 717.0 479.5" stroke="#ff00cc" fill="none"/>
<line x1="717.5" y1="479.5" x2="822.5" y2="479.5" stroke="#ff00cc" stroke-width="1"/>
<line x1="571.5" y1="475.5" x2="571.5" y2="479.5" stroke="#ff00cc" stroke-width="1"/>
<circle cx="314.9" cy="369.8" r="25" stroke="#a000e0" stroke-width="1" fill="none"/>
<circle cx="314.9" cy="369.8" r="21" stroke="#a000e0" stroke-width="1" fill="none"/>
<rect x="304.5" y="344.5" width="20" height="50" stroke="#a000e0" stroke-width="1" fill="#000"/>
<line x1="307.5" y1="344.5" x2="307.5" y2="394.5" stroke="#a000e0" stroke-width="1"/>
<line x1="321.5" y1="344.5" x2="321.5" y2="394.5" stroke="#a000e0" stroke-width="1"/>
<rect x="304" y="393" width="21" height="2" fill="#a000e0"/>
<polyline points="307.5,350.5 314.5,347.5 321.5,350.5" stroke="#a000e0" stroke-width="1" fill="none"/>
<polyline points="307.5,365.5 314.5,361.5 321.5,365.5" stroke="#a000e0" stroke-width="1" fill="none"/>
<polyline points="307.5,372.5 314.5,377.5 321.5,372.5" stroke="#a000e0" stroke-width="1" fill="none"/>
<circle cx="314.9" cy="390.5" r="4" stroke="#a000e0" stroke-width="1" fill="none"/>
<line x1="286.5" y1="369.5" x2="326.5" y2="369.5" stroke="#00ffff" stroke-width="1"/>
<line x1="329.5" y1="369.5" x2="347.5" y2="369.5" stroke="#00ffff" stroke-width="1"/>
<line x1="314.5" y1="339.5" x2="314.5" y2="383.5" stroke="#00ffff" stroke-width="1"/>
<line x1="314.5" y1="385.5" x2="314.5" y2="406.5" stroke="#00ffff" stroke-width="1"/>
<line x1="318.5" y1="320.5" x2="319.5" y2="344.5" stroke="#ff00cc" stroke-width="1"/>
<rect x="318" y="341" width="3" height="2" fill="#ff00cc"/>
<polyline points="112.5,441.5 112.5,340.5 309.5,340.5" stroke="#ff00cc" stroke-width="1" fill="none"/>
<rect x="307" y="339" width="2" height="3" fill="#ff00cc"/>
<line x1="308.5" y1="396.5" x2="186.5" y2="426.5" stroke="#ff00cc" stroke-width="1"/>
<polyline points="327.5,351.5 338.5,336.5 360.5,336.5" stroke="#0000ff" stroke-width="1" fill="none"/>
<rect x="327" y="351" width="2" height="2" fill="#0000ff"/>
<rect x="350" y="332" width="2" height="3" fill="#0000ff"/>
<circle cx="133.5" cy="452.2" r="16.7" stroke="#a000e0" stroke-width="1" fill="none"/>
<circle cx="133.5" cy="452.2" r="7.9" stroke="#a000e0" stroke-width="1" fill="none"/>
<line x1="133.5" y1="452.2" x2="135.8346096326246" y2="444.6528417359077" stroke="#a000e0" stroke-width="1"/>
<line x1="133.5" y1="452.2" x2="141.39920809828823" y2="452.08814554127116" stroke="#a000e0" stroke-width="1"/>
<line x1="133.5" y1="452.2" x2="136.04736945632598" y2="459.67802840680463" stroke="#a000e0" stroke-width="1"/>
<line x1="133.5" y1="452.2" x2="127.17515280762456" y2="456.9335301829713" stroke="#a000e0" stroke-width="1"/>
<line x1="133.5" y1="452.2" x2="127.04366000513666" y2="447.64745413304513" stroke="#a000e0" stroke-width="1"/>
<path d="M108.5 452.5 H116.5 M149.5 452.5 H156.5 M108.5 452.5 A24 23 0 0 0 156.5 452.5" fill="none" stroke="#a000e0"/>
<line x1="105.5" y1="457.5" x2="105.5" y2="488.5" stroke="#ff00cc" stroke-width="1"/>
<rect x="104" y="485" width="3" height="2" fill="#ff00cc"/>
<rect x="179.5" y="420.5" width="18" height="28" stroke="#a000e0" stroke-width="1" fill="none"/>
<line x1="179.5" y1="426.5" x2="197.5" y2="426.5" stroke="#a000e0" stroke-width="1"/>
<line x1="179.5" y1="433.5" x2="197.5" y2="433.5" stroke="#a000e0" stroke-width="1"/>
<line x1="179.5" y1="438.5" x2="197.5" y2="438.5" stroke="#a000e0" stroke-width="1"/>
<line x1="179.5" y1="444.5" x2="197.5" y2="444.5" stroke="#a000e0" stroke-width="1"/>
<polyline points="197.5,446.5 281.5,446.5 281.5,456.5" stroke="#ff00cc" stroke-width="1" fill="none"/>
<rect x="280" y="453" width="3" height="2" fill="#ff00cc"/>
<line x1="151.5" y1="446.5" x2="179.5" y2="446.5" stroke="#ff00cc" stroke-width="1"/>
<rect x="153" y="445" width="2" height="3" fill="#ff00cc"/>
<polyline points="137.5,441.5 150.5,424.5 168.5,424.5" stroke="#0000ff" stroke-width="1" fill="none"/>
<rect x="137" y="441" width="2" height="2" fill="#0000ff"/>
<rect x="160" y="420" width="2" height="3" fill="#0000ff"/>
<polyline points="183.5,422.5 186.5,416.5 195.5,416.5" stroke="#0000ff" stroke-width="1" fill="none"/>
<rect x="183" y="422" width="2" height="2" fill="#0000ff"/>
<rect x="191" y="412" width="2" height="3" fill="#0000ff"/>
<polyline points="93.5,492.5 118.5,492.5 118.5,509.5 99.5,509.5 93.5,502.5 93.5,492.5" stroke="#0000ff" stroke-width="1" fill="none"/>
<polyline points="115.5,501.5 122.5,491.5 135.5,491.5" stroke="#0000ff" stroke-width="1" fill="none"/>
<rect x="115" y="501" width="2" height="2" fill="#0000ff"/>
<rect x="129" y="487" width="2" height="3" fill="#0000ff"/>
<line x1="283.5" y1="460.5" x2="283.5" y2="505.5" stroke="#00ffff" stroke-width="1"/>
<rect x="272.5" y="460.5" width="22" height="3" stroke="#a000e0" stroke-width="1" fill="none"/>
<line x1="232.5" y1="467.5" x2="334.5" y2="467.5" stroke="#a000e0" stroke-width="1"/>
<polyline points="227.5,466.5 227.5,473.5 232.5,473.5" stroke="#a000e0" stroke-width="1" fill="none"/>
<polyline points="340.5,466.5 340.5,473.5 334.5,473.5" stroke="#a000e0" stroke-width="1" fill="none"/>
<polyline points="232.5,467.5 232.5,483.5 283.5,494.5 334.5,483.5 334.5,467.5" stroke="#a000e0" stroke-width="1" fill="none"/>
<polyline points="242.5,483.5 283.5,492.5 324.5,483.5" stroke="#a000e0" stroke-width="1" fill="none"/>
<polyline points="263.5,489.5 283.5,480.5 302.5,489.5" stroke="#a000e0" stroke-width="1" fill="none"/>
<polyline points="276.5,494.5 279.5,502.5 287.5,502.5 290.5,494.5" stroke="#a000e0" stroke-width="1" fill="none"/>
<line x1="275.5" y1="502.5" x2="289.5" y2="502.5" stroke="#a000e0" stroke-width="1"/>
<line x1="283.5" y1="460.5" x2="283.5" y2="505.5" stroke="#00ffff" stroke-width="1"/>
<line x1="283.5" y1="505.5" x2="283.5" y2="531.5" stroke="#ff00cc" stroke-width="1"/>
<rect x="282" y="529" width="3" height="2" fill="#ff00cc"/>
<rect x="563.5" y="560.5" width="22" height="3" stroke="#a000e0" stroke-width="1" fill="none"/>
<line x1="523.5" y1="567.5" x2="625.5" y2="567.5" stroke="#a000e0" stroke-width="1"/>
<polyline points="518.5,566.5 518.5,573.5 523.5,573.5" stroke="#a000e0" stroke-width="1" fill="none"/>
<polyline points="631.5,566.5 631.5,573.5 625.5,573.5" stroke="#a000e0" stroke-width="1" fill="none"/>
<polyline points="523.5,567.5 523.5,583.5 574.5,594.5 625.5,583.5 625.5,567.5" stroke="#a000e0" stroke-width="1" fill="none"/>
<polyline points="533.5,583.5 574.5,592.5 615.5,583.5" stroke="#a000e0" stroke-width="1" fill="none"/>
<polyline points="554.5,589.5 574.5,580.5 593.5,589.5" stroke="#a000e0" stroke-width="1" fill="none"/>
<polyline points="567.5,594.5 570.5,602.5 578.5,602.5 581.5,594.5" stroke="#a000e0" stroke-width="1" fill="none"/>
<line x1="566.5" y1="602.5" x2="580.5" y2="602.5" stroke="#a000e0" stroke-width="1"/>
<line x1="574.5" y1="560.5" x2="574.5" y2="605.5" stroke="#00ffff" stroke-width="1"/>
<polyline points="260.5,484.5 247.5,459.5 215.5,459.5" stroke="#0000ff" stroke-width="1" fill="none"/>
<rect x="260" y="484" width="2" height="2" fill="#0000ff"/>
<rect x="232" y="455" width="2" height="3" fill="#0000ff"/>
<polyline points="542.5,574.5 530.5,549.5 497.5,549.5" stroke="#0000ff" stroke-width="1" fill="none"/>
<rect x="542" y="574" width="2" height="2" fill="#0000ff"/>
<rect x="514" y="545" width="2" height="3" fill="#0000ff"/>
<line x1="574.5" y1="608.5" x2="574.5" y2="624.5" stroke="#ff00cc" stroke-width="1"/>
<rect x="573" y="622" width="3" height="2" fill="#ff00cc"/>
<rect x="268.5" y="535.5" width="42" height="8" stroke="#a000e0" stroke-width="1" fill="none"/>
<line x1="272.5" y1="535.5" x2="272.5" y2="543.5" stroke="#a000e0" stroke-width="1"/>
<line x1="277.5" y1="535.5" x2="277.5" y2="543.5" stroke="#a000e0" stroke-width="1"/>
<line x1="282.5" y1="535.5" x2="282.5" y2="543.5" stroke="#a000e0" stroke-width="1"/>
<line x1="288.5" y1="535.5" x2="288.5" y2="543.5" stroke="#a000e0" stroke-width="1"/>
<line x1="294.5" y1="535.5" x2="294.5" y2="543.5" stroke="#a000e0" stroke-width="1"/>
<line x1="300.5" y1="535.5" x2="300.5" y2="543.5" stroke="#a000e0" stroke-width="1"/>
<line x1="305.5" y1="535.5" x2="305.5" y2="543.5" stroke="#a000e0" stroke-width="1"/>
<line x1="310.5" y1="539.5" x2="324.5" y2="539.5" stroke="#a000e0" stroke-width="1"/>
<rect x="324.5" y="536.5" width="10" height="6" stroke="#a000e0" stroke-width="1" fill="none"/>
<line x1="271.5" y1="543.5" x2="271.5" y2="561.5" stroke="#a000e0" stroke-width="1"/>
<line x1="269.5" y1="561.5" x2="274.5" y2="561.5" stroke="#a000e0" stroke-width="1"/>
<line x1="329.5" y1="542.5" x2="329.5" y2="561.5" stroke="#a000e0" stroke-width="1"/>
<line x1="325.5" y1="561.5" x2="332.5" y2="561.5" stroke="#a000e0" stroke-width="1"/>
<polyline points="270.5,539.5 256.5,559.5 234.5,559.5" stroke="#0000ff" stroke-width="1" fill="none"/>
<rect x="270" y="539" width="2" height="2" fill="#0000ff"/>
<rect x="246" y="555" width="2" height="3" fill="#0000ff"/>
<polyline points="565.5,630.5 575.5,630.5 575.5,635.5 577.5,635.5" stroke="#a000e0" stroke-width="1" fill="none"/>
<path d="M577.5 636 V632 Q578 629.5 582 629.5 Q587.5 629.5 588.5 633 V639" fill="none" stroke="#a000e0"/>
<polyline points="567.5,638.5 577.5,639.5 577.5,636.5" stroke="#a000e0" stroke-width="1" fill="none"/>
<polyline points="579.5,641.5 581.5,647.5 583.5,647.5 587.5,639.5" stroke="#a000e0" stroke-width="1" fill="none"/>
<line x1="579.5" y1="641.5" x2="584.5" y2="641.5" stroke="#a000e0" stroke-width="1"/>
<polyline points="588.5,636.5 590.5,636.5 590.5,643.5 588.5,643.5 588.5,636.5" stroke="#a000e0" stroke-width="1" fill="none"/>
<line x1="555.5" y1="635.5" x2="594.5" y2="635.5" stroke="#00ffff" stroke-width="1"/>
<polyline points="583.5,647.5 583.5,650.5" stroke="#ff00cc" stroke-width="1" fill="none"/>
<polyline points="582.5,636.5 589.5,621.5 609.5,620.5" stroke="#0000ff" stroke-width="1" fill="none"/>
<rect x="582" y="636" width="2" height="2" fill="#0000ff"/>
<rect x="600" y="616" width="2" height="3" fill="#0000ff"/>
<defs><pattern id="tt" width="5" height="5" patternUnits="userSpaceOnUse"><rect width="5" height="5" fill="#a000e0"/><rect x="0" y="0" width="2" height="2" fill="#3020ff"/><rect x="3" y="2" width="1" height="2" fill="#e01060"/><rect x="2" y="4" width="2" height="1" fill="#000"/></pattern></defs>
<rect x="541.0" y="679" width="4.6" height="4" fill="url(#tt)"/>
<rect x="546.4" y="679" width="4.6" height="4" fill="url(#tt)"/>
<rect x="551.8" y="679" width="4.6" height="4" fill="url(#tt)"/>
<rect x="557.2" y="679" width="4.6" height="4" fill="url(#tt)"/>
<rect x="562.6" y="679" width="4.6" height="4" fill="url(#tt)"/>
<line x1="542.5" y1="684.5" x2="568.5" y2="684.5" stroke="#a000e0" stroke-width="1"/>
<line x1="542.5" y1="686.5" x2="568.5" y2="686.5" stroke="#a000e0" stroke-width="1"/>
<defs><pattern id="tx" width="9" height="7" patternUnits="userSpaceOnUse"><rect width="9" height="7" fill="#fff"/><rect x="2" y="2" width="1" height="1" fill="#000"/><rect x="6" y="4" width="2" height="1" fill="#000"/><rect x="4" y="5" width="1" height="1" fill="#000"/></pattern><pattern id="tx2" width="6" height="7" patternUnits="userSpaceOnUse"><rect width="6" height="7" fill="#fff"/><rect x="1" y="1" width="1" height="2" fill="#000"/><rect x="3" y="3" width="2" height="1" fill="#000"/><rect x="2" y="5" width="3" height="1" fill="#000"/><rect x="5" y="1" width="1" height="1" fill="#000"/></pattern></defs>
<line x1="860.5" y1="453.5" x2="1008.5" y2="453.5" stroke="#ffffff" stroke-width="1"/>
<line x1="860.5" y1="460.5" x2="1008.5" y2="460.5" stroke="#ffffff" stroke-width="1"/>
<line x1="860.5" y1="467.5" x2="1008.5" y2="467.5" stroke="#ffffff" stroke-width="1"/>
<line x1="860.5" y1="474.5" x2="1008.5" y2="474.5" stroke="#ffffff" stroke-width="1"/>
<line x1="860.5" y1="481.5" x2="1008.5" y2="481.5" stroke="#ffffff" stroke-width="1"/>
<line x1="860.5" y1="487.5" x2="1008.5" y2="487.5" stroke="#ffffff" stroke-width="1"/>
<line x1="860.5" y1="494.5" x2="1008.5" y2="494.5" stroke="#ffffff" stroke-width="1"/>
<line x1="860.5" y1="501.5" x2="1008.5" y2="501.5" stroke="#ffffff" stroke-width="1"/>
<line x1="860.5" y1="507.5" x2="1008.5" y2="507.5" stroke="#ffffff" stroke-width="1"/>
<line x1="860.5" y1="514.5" x2="1008.5" y2="514.5" stroke="#ffffff" stroke-width="1"/>
<line x1="860.5" y1="521.5" x2="1008.5" y2="521.5" stroke="#ffffff" stroke-width="1"/>
<line x1="860.5" y1="527.5" x2="1008.5" y2="527.5" stroke="#ffffff" stroke-width="1"/>
<line x1="860.5" y1="534.5" x2="1008.5" y2="534.5" stroke="#ffffff" stroke-width="1"/>
<line x1="860.5" y1="540.5" x2="1008.5" y2="540.5" stroke="#ffffff" stroke-width="1"/>
<line x1="860.5" y1="546.5" x2="1008.5" y2="546.5" stroke="#ffffff" stroke-width="1"/>
<line x1="860.5" y1="552.5" x2="1008.5" y2="552.5" stroke="#ffffff" stroke-width="1"/>
<line x1="860.5" y1="558.5" x2="1008.5" y2="558.5" stroke="#ffffff" stroke-width="1"/>
<line x1="860.5" y1="564.5" x2="1008.5" y2="564.5" stroke="#ffffff" stroke-width="1"/>
<line x1="860.5" y1="570.5" x2="1008.5" y2="570.5" stroke="#ffffff" stroke-width="1"/>
<line x1="860.5" y1="576.5" x2="1008.5" y2="576.5" stroke="#ffffff" stroke-width="1"/>
<line x1="860.5" y1="582.5" x2="1008.5" y2="582.5" stroke="#ffffff" stroke-width="1"/>
<line x1="860.5" y1="589.5" x2="1008.5" y2="589.5" stroke="#ffffff" stroke-width="1"/>
<line x1="860.5" y1="595.5" x2="1008.5" y2="595.5" stroke="#ffffff" stroke-width="1"/>
<line x1="860.5" y1="601.5" x2="1008.5" y2="601.5" stroke="#ffffff" stroke-width="1"/>
<line x1="860.5" y1="607.5" x2="1008.5" y2="607.5" stroke="#ffffff" stroke-width="1"/>
<line x1="860.5" y1="613.5" x2="1008.5" y2="613.5" stroke="#ffffff" stroke-width="1"/>
<line x1="860.5" y1="619.5" x2="1008.5" y2="619.5" stroke="#ffffff" stroke-width="1"/>
<line x1="860.5" y1="625.5" x2="1008.5" y2="625.5" stroke="#ffffff" stroke-width="1"/>
<line x1="860.5" y1="631.5" x2="1008.5" y2="631.5" stroke="#ffffff" stroke-width="1"/>
<line x1="860.5" y1="640.5" x2="1008.5" y2="640.5" stroke="#ffffff" stroke-width="1"/>
<line x1="860.5" y1="453.5" x2="860.5" y2="640.5" stroke="#ffffff" stroke-width="1"/>
<line x1="868.5" y1="453.5" x2="868.5" y2="640.5" stroke="#ffffff" stroke-width="1"/>
<line x1="938.5" y1="453.5" x2="938.5" y2="640.5" stroke="#ffffff" stroke-width="1"/>
<line x1="947.5" y1="453.5" x2="947.5" y2="640.5" stroke="#ffffff" stroke-width="1"/>
<line x1="959.5" y1="453.5" x2="959.5" y2="640.5" stroke="#ffffff" stroke-width="1"/>
<line x1="985.5" y1="453.5" x2="985.5" y2="640.5" stroke="#ffffff" stroke-width="1"/>
<line x1="1008.5" y1="453.5" x2="1008.5" y2="640.5" stroke="#ffffff" stroke-width="1"/>
<line x1="861.5" y1="453.5" x2="861.5" y2="640.5" stroke="#ffffff" stroke-width="1"/>
<rect x="880" y="455" width="17" height="5" fill="url(#tx2)" opacity="1"/>
<rect x="939" y="455" width="1" height="5" fill="#ffffff"/>
<rect x="941" y="456" width="3" height="1" fill="#ffffff"/>
<rect x="942" y="458" width="2" height="1" fill="#ffffff"/>
<rect x="950" y="455" width="1" height="5" fill="#ffffff"/>
<rect x="951" y="455" width="1" height="1" fill="#ffffff"/>
<rect x="862" y="454" width="2" height="6" fill="#ffffff"/>
<rect x="864" y="455" width="2" height="1" fill="#ffffff"/>
<rect x="879" y="462" width="17" height="5" fill="url(#tx2)" opacity="1"/>
<rect x="939" y="462" width="1" height="5" fill="#ffffff"/>
<rect x="941" y="463" width="3" height="1" fill="#ffffff"/>
<rect x="942" y="465" width="2" height="1" fill="#ffffff"/>
<rect x="950" y="462" width="1" height="5" fill="#ffffff"/>
<rect x="951" y="462" width="1" height="1" fill="#ffffff"/>
<rect x="862" y="461" width="2" height="6" fill="#ffffff"/>
<rect x="877" y="469" width="18" height="5" fill="url(#tx2)" opacity="1"/>
<rect x="939" y="469" width="1" height="5" fill="#ffffff"/>
<rect x="941" y="470" width="3" height="1" fill="#ffffff"/>
<rect x="942" y="472" width="2" height="1" fill="#ffffff"/>
<rect x="950" y="469" width="1" height="5" fill="#ffffff"/>
<rect x="951" y="469" width="1" height="1" fill="#ffffff"/>
<rect x="862" y="468" width="2" height="6" fill="#ffffff"/>
<rect x="864" y="469" width="2" height="1" fill="#ffffff"/>
<rect x="874" y="476" width="44" height="5" fill="url(#tx2)" opacity="1"/>
<rect x="939" y="476" width="1" height="5" fill="#ffffff"/>
<rect x="941" y="477" width="3" height="1" fill="#ffffff"/>
<rect x="942" y="479" width="2" height="1" fill="#ffffff"/>
<rect x="950" y="476" width="1" height="5" fill="#ffffff"/>
<rect x="951" y="476" width="1" height="1" fill="#ffffff"/>
<rect x="862" y="475" width="2" height="6" fill="#ffffff"/>
<rect x="881" y="483" width="36" height="4" fill="url(#tx2)" opacity="0.55"/>
<rect x="939" y="483" width="1" height="4" fill="#ffffff"/>
<rect x="941" y="484" width="3" height="1" fill="#ffffff"/>
<rect x="942" y="485" width="2" height="1" fill="#ffffff"/>
<rect x="950" y="483" width="1" height="4" fill="#ffffff"/>
<rect x="951" y="483" width="1" height="1" fill="#ffffff"/>
<rect x="862" y="482" width="2" height="5" fill="#ffffff"/>
<rect x="864" y="483" width="2" height="1" fill="#ffffff"/>
<rect x="886" y="489" width="17" height="5" fill="url(#tx2)" opacity="1"/>
<rect x="939" y="489" width="1" height="5" fill="#ffffff"/>
<rect x="941" y="490" width="3" height="1" fill="#ffffff"/>
<rect x="942" y="492" width="2" height="1" fill="#ffffff"/>
<rect x="950" y="489" width="1" height="5" fill="#ffffff"/>
<rect x="951" y="489" width="1" height="1" fill="#ffffff"/>
<rect x="862" y="488" width="2" height="6" fill="#ffffff"/>
<rect x="880" y="496" width="32" height="5" fill="url(#tx2)" opacity="1"/>
<rect x="939" y="496" width="1" height="5" fill="#ffffff"/>
<rect x="941" y="497" width="3" height="1" fill="#ffffff"/>
<rect x="942" y="499" width="2" height="1" fill="#ffffff"/>
<rect x="950" y="496" width="1" height="5" fill="#ffffff"/>
<rect x="951" y="496" width="1" height="1" fill="#ffffff"/>
<rect x="862" y="495" width="2" height="6" fill="#ffffff"/>
<rect x="864" y="496" width="2" height="1" fill="#ffffff"/>
<rect x="876" y="503" width="50" height="4" fill="url(#tx2)" opacity="1"/>
<rect x="939" y="503" width="1" height="4" fill="#ffffff"/>
<rect x="941" y="504" width="3" height="1" fill="#ffffff"/>
<rect x="942" y="505" width="2" height="1" fill="#ffffff"/>
<rect x="950" y="503" width="1" height="4" fill="#ffffff"/>
<rect x="951" y="503" width="1" height="1" fill="#ffffff"/>
<rect x="862" y="502" width="2" height="5" fill="#ffffff"/>
<rect x="879" y="509" width="26" height="5" fill="url(#tx2)" opacity="1"/>
<rect x="939" y="509" width="1" height="5" fill="#ffffff"/>
<rect x="941" y="510" width="3" height="1" fill="#ffffff"/>
<rect x="942" y="512" width="2" height="1" fill="#ffffff"/>
<rect x="950" y="509" width="1" height="5" fill="#ffffff"/>
<rect x="951" y="509" width="1" height="1" fill="#ffffff"/>
<rect x="862" y="508" width="2" height="6" fill="#ffffff"/>
<rect x="864" y="509" width="2" height="1" fill="#ffffff"/>
<rect x="878" y="516" width="28" height="5" fill="url(#tx2)" opacity="1"/>
<rect x="939" y="516" width="1" height="5" fill="#ffffff"/>
<rect x="941" y="517" width="3" height="1" fill="#ffffff"/>
<rect x="942" y="519" width="2" height="1" fill="#ffffff"/>
<rect x="950" y="516" width="1" height="5" fill="#ffffff"/>
<rect x="951" y="516" width="1" height="1" fill="#ffffff"/>
<rect x="862" y="515" width="2" height="6" fill="#ffffff"/>
<rect x="874" y="522" width="36" height="5" fill="url(#tx)" opacity="1"/>
<rect x="939" y="523" width="1" height="4" fill="#ffffff"/>
<rect x="941" y="524" width="3" height="1" fill="#ffffff"/>
<rect x="942" y="525" width="2" height="1" fill="#ffffff"/>
<rect x="950" y="523" width="1" height="4" fill="#ffffff"/>
<rect x="951" y="523" width="1" height="1" fill="#ffffff"/>
<rect x="862" y="522" width="2" height="5" fill="#ffffff"/>
<rect x="864" y="523" width="2" height="1" fill="#ffffff"/>
<rect x="878" y="528" width="31" height="6" fill="url(#tx)" opacity="1"/>
<rect x="939" y="529" width="1" height="5" fill="#ffffff"/>
<rect x="941" y="530" width="3" height="1" fill="#ffffff"/>
<rect x="942" y="532" width="2" height="1" fill="#ffffff"/>
<rect x="950" y="529" width="1" height="5" fill="#ffffff"/>
<rect x="951" y="529" width="1" height="1" fill="#ffffff"/>
<rect x="862" y="528" width="2" height="6" fill="#ffffff"/>
<rect x="885" y="535" width="18" height="5" fill="url(#tx)" opacity="1"/>
<rect x="939" y="536" width="1" height="4" fill="#ffffff"/>
<rect x="941" y="537" width="3" height="1" fill="#ffffff"/>
<rect x="942" y="538" width="2" height="1" fill="#ffffff"/>
<rect x="950" y="536" width="1" height="4" fill="#ffffff"/>
<rect x="951" y="536" width="1" height="1" fill="#ffffff"/>
<rect x="862" y="535" width="2" height="5" fill="#ffffff"/>
<rect x="864" y="536" width="2" height="1" fill="#ffffff"/>
<rect x="883" y="541" width="21" height="5" fill="url(#tx)" opacity="1"/>
<rect x="939" y="542" width="1" height="4" fill="#ffffff"/>
<rect x="941" y="543" width="3" height="1" fill="#ffffff"/>
<rect x="942" y="544" width="2" height="1" fill="#ffffff"/>
<rect x="950" y="542" width="1" height="4" fill="#ffffff"/>
<rect x="951" y="542" width="1" height="1" fill="#ffffff"/>
<rect x="862" y="541" width="2" height="5" fill="#ffffff"/>
<rect x="878" y="547" width="34" height="5" fill="url(#tx)" opacity="1"/>
<rect x="939" y="548" width="1" height="4" fill="#ffffff"/>
<rect x="941" y="549" width="3" height="1" fill="#ffffff"/>
<rect x="942" y="550" width="2" height="1" fill="#ffffff"/>
<rect x="950" y="548" width="1" height="4" fill="#ffffff"/>
<rect x="951" y="548" width="1" height="1" fill="#ffffff"/>
<rect x="862" y="547" width="2" height="5" fill="#ffffff"/>
<rect x="864" y="548" width="2" height="1" fill="#ffffff"/>
<rect x="878" y="553" width="34" height="5" fill="url(#tx)" opacity="1"/>
<rect x="939" y="554" width="1" height="4" fill="#ffffff"/>
<rect x="941" y="555" width="3" height="1" fill="#ffffff"/>
<rect x="942" y="556" width="2" height="1" fill="#ffffff"/>
<rect x="950" y="554" width="1" height="4" fill="#ffffff"/>
<rect x="951" y="554" width="1" height="1" fill="#ffffff"/>
<rect x="862" y="553" width="2" height="5" fill="#ffffff"/>
<rect x="880" y="559" width="30" height="5" fill="url(#tx)" opacity="1"/>
<rect x="939" y="560" width="1" height="4" fill="#ffffff"/>
<rect x="941" y="561" width="3" height="1" fill="#ffffff"/>
<rect x="942" y="562" width="2" height="1" fill="#ffffff"/>
<rect x="950" y="560" width="1" height="4" fill="#ffffff"/>
<rect x="951" y="560" width="1" height="1" fill="#ffffff"/>
<rect x="862" y="559" width="2" height="5" fill="#ffffff"/>
<rect x="864" y="560" width="2" height="1" fill="#ffffff"/>
<rect x="879" y="565" width="30" height="5" fill="url(#tx)" opacity="1"/>
<rect x="939" y="566" width="1" height="4" fill="#ffffff"/>
<rect x="941" y="567" width="3" height="1" fill="#ffffff"/>
<rect x="942" y="568" width="2" height="1" fill="#ffffff"/>
<rect x="950" y="566" width="1" height="4" fill="#ffffff"/>
<rect x="951" y="566" width="1" height="1" fill="#ffffff"/>
<rect x="862" y="565" width="2" height="5" fill="#ffffff"/>
<rect x="880" y="571" width="30" height="5" fill="url(#tx)" opacity="1"/>
<rect x="939" y="572" width="1" height="4" fill="#ffffff"/>
<rect x="941" y="573" width="3" height="1" fill="#ffffff"/>
<rect x="942" y="574" width="2" height="1" fill="#ffffff"/>
<rect x="950" y="572" width="1" height="4" fill="#ffffff"/>
<rect x="951" y="572" width="1" height="1" fill="#ffffff"/>
<rect x="862" y="571" width="2" height="5" fill="#ffffff"/>
<rect x="864" y="572" width="2" height="1" fill="#ffffff"/>
<rect x="881" y="577" width="30" height="5" fill="url(#tx)" opacity="1"/>
<rect x="939" y="578" width="1" height="4" fill="#ffffff"/>
<rect x="941" y="579" width="3" height="1" fill="#ffffff"/>
<rect x="942" y="580" width="2" height="1" fill="#ffffff"/>
<rect x="950" y="578" width="1" height="4" fill="#ffffff"/>
<rect x="951" y="578" width="1" height="1" fill="#ffffff"/>
<rect x="862" y="577" width="2" height="5" fill="#ffffff"/>
<rect x="870" y="583" width="62" height="6" fill="url(#tx)" opacity="1"/>
<rect x="939" y="584" width="1" height="5" fill="#ffffff"/>
<rect x="941" y="585" width="3" height="1" fill="#ffffff"/>
<rect x="942" y="587" width="2" height="1" fill="#ffffff"/>
<rect x="950" y="584" width="1" height="5" fill="#ffffff"/>
<rect x="951" y="584" width="1" height="1" fill="#ffffff"/>
<rect x="862" y="583" width="2" height="6" fill="#ffffff"/>
<rect x="864" y="584" width="2" height="1" fill="#ffffff"/>
<rect x="877" y="590" width="41" height="5" fill="url(#tx)" opacity="1"/>
<rect x="939" y="591" width="1" height="4" fill="#ffffff"/>
<rect x="941" y="592" width="3" height="1" fill="#ffffff"/>
<rect x="942" y="593" width="2" height="1" fill="#ffffff"/>
<rect x="950" y="591" width="1" height="4" fill="#ffffff"/>
<rect x="951" y="591" width="1" height="1" fill="#ffffff"/>
<rect x="862" y="590" width="2" height="5" fill="#ffffff"/>
<rect x="876" y="596" width="44" height="5" fill="url(#tx)" opacity="1"/>
<rect x="939" y="597" width="1" height="4" fill="#ffffff"/>
<rect x="941" y="598" width="3" height="1" fill="#ffffff"/>
<rect x="942" y="599" width="2" height="1" fill="#ffffff"/>
<rect x="950" y="597" width="1" height="4" fill="#ffffff"/>
<rect x="951" y="597" width="1" height="1" fill="#ffffff"/>
<rect x="862" y="596" width="2" height="5" fill="#ffffff"/>
<rect x="864" y="597" width="2" height="1" fill="#ffffff"/>
<rect x="876" y="602" width="47" height="5" fill="url(#tx)" opacity="1"/>
<rect x="939" y="603" width="1" height="4" fill="#ffffff"/>
<rect x="941" y="604" width="3" height="1" fill="#ffffff"/>
<rect x="942" y="605" width="2" height="1" fill="#ffffff"/>
<rect x="950" y="603" width="1" height="4" fill="#ffffff"/>
<rect x="951" y="603" width="1" height="1" fill="#ffffff"/>
<rect x="862" y="602" width="2" height="5" fill="#ffffff"/>
<rect x="879" y="608" width="26" height="5" fill="url(#tx)" opacity="1"/>
<rect x="939" y="609" width="1" height="4" fill="#ffffff"/>
<rect x="941" y="610" width="3" height="1" fill="#ffffff"/>
<rect x="942" y="611" width="2" height="1" fill="#ffffff"/>
<rect x="950" y="609" width="1" height="4" fill="#ffffff"/>
<rect x="951" y="609" width="1" height="1" fill="#ffffff"/>
<rect x="862" y="608" width="2" height="5" fill="#ffffff"/>
<rect x="864" y="609" width="2" height="1" fill="#ffffff"/>
<rect x="873" y="614" width="50" height="5" fill="url(#tx)" opacity="1"/>
<rect x="939" y="615" width="1" height="4" fill="#ffffff"/>
<rect x="941" y="616" width="3" height="1" fill="#ffffff"/>
<rect x="942" y="617" width="2" height="1" fill="#ffffff"/>
<rect x="950" y="615" width="1" height="4" fill="#ffffff"/>
<rect x="951" y="615" width="1" height="1" fill="#ffffff"/>
<rect x="862" y="614" width="2" height="5" fill="#ffffff"/>
<rect x="882" y="620" width="12" height="5" fill="url(#tx)" opacity="1"/>
<rect x="939" y="621" width="1" height="4" fill="#ffffff"/>
<rect x="941" y="622" width="3" height="1" fill="#ffffff"/>
<rect x="942" y="623" width="2" height="1" fill="#ffffff"/>
<rect x="950" y="621" width="1" height="4" fill="#ffffff"/>
<rect x="951" y="621" width="1" height="1" fill="#ffffff"/>
<rect x="862" y="620" width="2" height="5" fill="#ffffff"/>
<rect x="864" y="621" width="2" height="1" fill="#ffffff"/>
<rect x="883" y="626" width="10" height="5" fill="url(#tx)" opacity="1"/>
<rect x="939" y="627" width="1" height="4" fill="#ffffff"/>
<rect x="941" y="628" width="3" height="1" fill="#ffffff"/>
<rect x="942" y="629" width="2" height="1" fill="#ffffff"/>
<rect x="950" y="627" width="1" height="4" fill="#ffffff"/>
<rect x="951" y="627" width="1" height="1" fill="#ffffff"/>
<rect x="862" y="626" width="2" height="5" fill="#ffffff"/>
<rect x="968" y="476" width="8" height="5" fill="url(#tx2)" opacity="1"/>
<rect x="965" y="483" width="13" height="4" fill="url(#tx2)" opacity="1"/>
<rect x="968" y="496" width="11" height="5" fill="url(#tx2)" opacity="1"/>
<rect x="970" y="503" width="4" height="4" fill="url(#tx2)" opacity="1"/>
<rect x="970" y="509" width="4" height="5" fill="url(#tx2)" opacity="1"/>
<rect x="971" y="523" width="5" height="4" fill="url(#tx2)" opacity="1"/>
<rect x="966" y="529" width="14" height="5" fill="url(#tx2)" opacity="1"/>
<rect x="968" y="560" width="10" height="4" fill="url(#tx2)" opacity="1"/>
<rect x="968" y="566" width="10" height="4" fill="url(#tx2)" opacity="1"/>
<rect x="966" y="591" width="14" height="4" fill="url(#tx2)" opacity="1"/>
<rect x="969" y="603" width="10" height="4" fill="url(#tx2)" opacity="1"/>
<rect x="966" y="609" width="14" height="4" fill="url(#tx2)" opacity="1"/>
<rect x="970" y="615" width="6" height="4" fill="url(#tx2)" opacity="1"/>
<rect x="990" y="560" width="17" height="4" fill="url(#tx2)" opacity="1"/>
<rect x="986" y="584" width="22" height="5" fill="url(#tx2)" opacity="1"/>
<rect x="987" y="609" width="19" height="4" fill="url(#tx2)" opacity="1"/>
<rect x="862" y="633" width="6" height="7" fill="url(#tx)" opacity="1"/>
<rect x="876" y="633" width="30" height="7" fill="url(#tx)" opacity="1"/>
<rect x="940" y="633" width="7" height="7" fill="url(#tx)" opacity="1"/>
<rect x="949" y="633" width="9" height="7" fill="url(#tx)" opacity="1"/>
<rect x="968" y="633" width="14" height="7" fill="url(#tx)" opacity="1"/>
<rect x="991" y="634" width="12" height="5" fill="#ffffff"/>
<line x1="860.5" y1="651.5" x2="1008.5" y2="651.5" stroke="#ffffff" stroke-width="1"/>
<line x1="860.5" y1="669.5" x2="1008.5" y2="669.5" stroke="#ffffff" stroke-width="1"/>
<line x1="860.5" y1="680.5" x2="1008.5" y2="680.5" stroke="#ffffff" stroke-width="1"/>
<line x1="860.5" y1="690.5" x2="1008.5" y2="690.5" stroke="#ffffff" stroke-width="1"/>
<line x1="860.5" y1="701.5" x2="1008.5" y2="701.5" stroke="#ffffff" stroke-width="1"/>
<line x1="860.5" y1="640.5" x2="860.5" y2="711.5" stroke="#ffffff" stroke-width="1"/>
<line x1="1008.5" y1="640.5" x2="1008.5" y2="711.5" stroke="#ffffff" stroke-width="1"/>
<line x1="892.5" y1="669.5" x2="892.5" y2="711.5" stroke="#ffffff" stroke-width="1"/>
<line x1="934.5" y1="680.5" x2="934.5" y2="711.5" stroke="#ffffff" stroke-width="1"/>
<line x1="966.5" y1="680.5" x2="966.5" y2="711.5" stroke="#ffffff" stroke-width="1"/>
<rect x="917" y="645" width="4" height="5" fill="url(#tx)" opacity="1"/>
<rect x="928" y="645" width="4" height="5" fill="url(#tx)" opacity="1"/>
<rect x="939" y="645" width="4" height="5" fill="url(#tx)" opacity="1"/>
<rect x="950" y="645" width="4" height="5" fill="url(#tx)" opacity="1"/>
<rect x="961" y="645" width="4" height="5" fill="url(#tx)" opacity="1"/>
<rect x="895" y="659" width="81" height="7" fill="url(#tx)" opacity="1"/>
<rect x="867" y="673" width="5" height="6" fill="url(#tx)" opacity="1"/>
<rect x="880" y="673" width="5" height="6" fill="url(#tx)" opacity="1"/>
<rect x="931" y="673" width="5" height="6" fill="url(#tx)" opacity="1"/>
<rect x="940" y="673" width="5" height="6" fill="url(#tx)" opacity="1"/>
<rect x="949" y="673" width="5" height="6" fill="url(#tx)" opacity="1"/>
<rect x="958" y="673" width="5" height="6" fill="url(#tx)" opacity="1"/>
<rect x="967" y="673" width="5" height="6" fill="url(#tx)" opacity="1"/>
<rect x="867" y="684" width="19" height="6" fill="url(#tx)" opacity="1"/>
<rect x="907" y="684" width="5" height="6" fill="url(#tx)" opacity="1"/>
<rect x="915" y="684" width="5" height="6" fill="url(#tx)" opacity="1"/>
<rect x="942" y="684" width="5" height="6" fill="url(#tx)" opacity="1"/>
<rect x="954" y="684" width="5" height="6" fill="url(#tx)" opacity="1"/>
<rect x="867" y="693" width="19" height="6" fill="url(#tx)" opacity="1"/>
<rect x="906" y="692" width="14" height="6" fill="url(#tx)" opacity="1"/>
<rect x="942" y="693" width="5" height="7" fill="url(#tx)" opacity="1"/>
<rect x="954" y="693" width="5" height="7" fill="url(#tx)" opacity="1"/>
<rect x="988" y="693" width="4" height="7" fill="url(#tx)" opacity="1"/>
<rect x="867" y="703" width="19" height="7" fill="url(#tx)" opacity="1"/>
<rect x="942" y="703" width="17" height="7" fill="url(#tx)" opacity="1"/>
<rect x="977" y="703" width="20" height="7" fill="url(#tx)" opacity="1"/>
</svg>
<div id="tabs">
<svg class="abs" width="1057" height="10">
<rect x="0" y="0" width="1057" height="10" fill="#f0f0f0"/>
<rect x="0" y="0" width="1057" height="1" fill="#000"/>
<rect x="5" y="1" width="1" height="9" fill="#a0a0a0"/><rect x="23" y="1" width="1" height="9" fill="#808080"/><rect x="24" y="1" width="1" height="9" fill="#ffffff"/>
<path d="M12 4l6 4-6 4z" fill="#000"/><rect x="18" y="4" width="2" height="6" fill="#000"/>
<rect x="26" y="0" width="41" height="10" fill="#000"/>
<path d="M28.5 0.5l2.5 9.5M65.5 0.5l-2 9.5" stroke="#c0c0c0" stroke-width="1"/>
<path d="M107.5 1l-1.5 9M149.5 1l-1.5 9" stroke="#404040" stroke-width="1"/>
<g stroke="#fff" stroke-width="1" fill="none" shape-rendering="crispEdges"><path d="M37.5 2v8M35 4.5h5M36 8l-1 1M41 2.5h5M42.5 1v3M44.5 1v3M41.5 4.5h4v4h-4zM41 6.5h5"/><path d="M47.5 2.5h5.5M47 5.5h6M49.5 2.5v4l-1 3M51.5 2.5v7M55.5 2v6M57.5 1v9"/></g>
<g transform="translate(0,0)" stroke="#000" stroke-width="1" fill="none" shape-rendering="crispEdges"><path d="M71 3.5h11M75 3l-4 7M74.5 5.5h6M74.5 5v5M80.5 5v5M77.5 4v6"/><path d="M85 2.5h7.5v7M85 4.5h7M85 2v8M86.5 6.5h4v3h-4z"/></g>
<g transform="translate(42,0)" stroke="#000" stroke-width="1" fill="none" shape-rendering="crispEdges"><path d="M71 3.5h11M75 3l-4 7M74.5 5.5h6M74.5 5v5M80.5 5v5M77.5 4v6"/><path d="M85 2.5h7.5v7M85 4.5h7M85 2v8M86.5 6.5h4v3h-4z"/></g>
<path d="M96.5 4l1-1v7" stroke="#000" fill="none"/>
<path d="M136 4q1-1.5 2.5-1 1.5 1 0 3l-2.5 3h3.5" stroke="#000" fill="none"/>
</svg>
</div>
</body></html>
